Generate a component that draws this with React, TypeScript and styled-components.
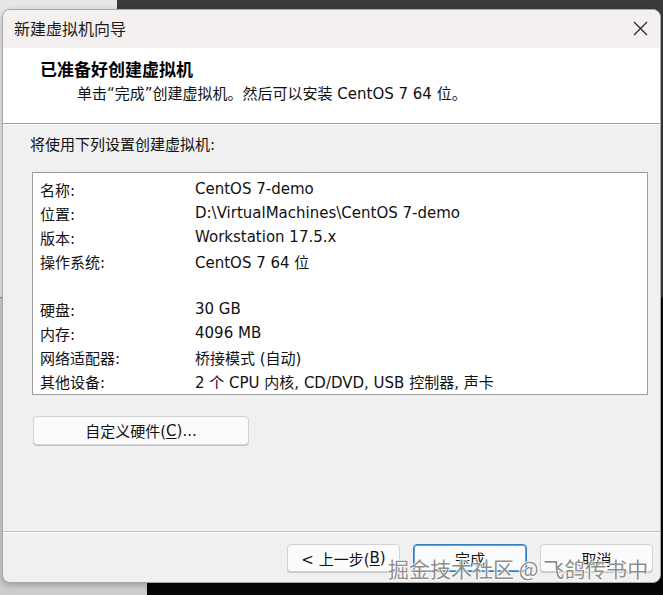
import styled, { createGlobalStyle } from "styled-components";

const GlobalStyle = createGlobalStyle`
  html, body {
    margin: 0;
    padding: 0;
  }
  body {
    font-family: "DejaVu Sans", "Noto Sans CJK SC", sans-serif;
    color: #111;
  }
`;

const Stage = styled.div`
  position: relative;
  width: 663px;
  height: 595px;
  overflow: hidden;
  box-sizing: border-box;
  padding: 9px 0 0 2px;
  background:
    linear-gradient(#e7e7e7, #e7e7e7) 0 0 / 117px 50% no-repeat,
    linear-gradient(#3a3a3a, #3a3a3a) 0 0 / 100% 50% no-repeat,
    linear-gradient(#cdcdcd, #cdcdcd) 0 100% / 147px 50% no-repeat,
    #060606;
`;

const Window = styled.div`
  width: 659px;
  height: 574px;
  box-sizing: border-box;
  display: flex;
  flex-direction: column;
  border: 1px solid #a9a9a9;
  border-radius: 8px;
  overflow: hidden;
  background: #f0f0f0;
  box-shadow: 0 2px 6px rgba(0, 0, 0, 0.25);
`;

const TitleBar = styled.div`
  height: 38px;
  flex: none;
  display: flex;
  align-items: center;
  justify-content: space-between;
  padding: 0 9px 2px 11px;
  box-sizing: border-box;
  background: #f4f0ef;
  font-family: "Noto Sans CJK SC", sans-serif;
  font-size: 16px;
  color: #1a1a1a;
`;

const CloseButton = styled.span`
  display: flex;
  align-items: center;
  justify-content: center;
  width: 22px;
  height: 22px;
`;

const Header = styled.div`
  height: 76px;
  flex: none;
  box-sizing: border-box;
  padding: 10px 0 0 37px;
  background: #ffffff;
  border-bottom: 1px solid #a0a0a0;
  box-shadow: 0 1px 0 #ffffff;
`;

const Heading = styled.div`
  font-family: "Noto Sans CJK SC", sans-serif;
  font-weight: 700;
  font-size: 17px;
  line-height: 22px;
  color: #000;
`;

const Subtitle = styled.div`
  margin-top: 2px;
  padding-left: 37px;
  font-size: 15px;
  line-height: 24px;
  color: #111;
`;

const Body = styled.div`
  flex: 1;
  display: flex;
  flex-direction: column;
  padding: 11px 12px 0 29px;
`;

const Intro = styled.div`
  margin-left: -2px;
  font-size: 15px;
  line-height: 20px;
`;

const SummaryBox = styled.div`
  margin-top: 17px;
  height: 223px;
  box-sizing: border-box;
  padding: 4px 7px 0;
  background: #ffffff;
  border: 1px solid #9c9c9c;
`;

const SummaryRow = styled.div`
  display: grid;
  grid-template-columns: 155px 1fr;
  height: 24px;
  align-items: center;
  font-size: 15px;
  white-space: nowrap;
`;

const Button = styled.button<{ $width: number; $primary?: boolean }>`
  width: ${(p) => p.$width}px;
  height: 28px;
  box-sizing: border-box;
  padding: 0;
  border-radius: 4px;
  border: 1px solid ${(p) => (p.$primary ? "#2f7fc4" : "#d2d2d2")};
  box-shadow: ${(p) => (p.$primary ? "inset 0 0 0 1px #5ea0d8" : "0 1px 0 #c4c4c4")};
  background: #fbfbfb;
  font-family: "DejaVu Sans", "Noto Sans CJK SC", sans-serif;
  font-size: 15px;
  color: #111;
  display: flex;
  align-items: center;
  justify-content: center;
`;

const CustomButton = styled(Button)`
  margin-top: 21px;
  margin-left: 1px;
  height: 29px;
`;

const Footer = styled.div`
  height: 51px;
  flex: none;
  box-sizing: border-box;
  display: flex;
  justify-content: flex-end;
  gap: 13px;
  padding: 12px 7px 0 0;
  border-top: 1px solid #bdbdbd;
  box-shadow: inset 0 1px 0 #ffffff;
`;

const Key = styled.span`
  text-decoration: underline;
  text-underline-offset: 2px;
`;

const Watermark = styled.div`
  position: absolute;
  left: 388px;
  top: 553px;
  font-family: "Noto Sans CJK SC", sans-serif;
  font-size: 21px;
  line-height: 30px;
  color: rgba(110, 110, 110, 0.8);
  text-shadow:
    1px 0 0 rgba(255, 255, 255, 0.8),
    -1px 0 0 rgba(255, 255, 255, 0.8),
    0 1px 0 rgba(255, 255, 255, 0.8),
    0 -1px 0 rgba(255, 255, 255, 0.8);
  white-space: nowrap;
  pointer-events: none;
`;

const rows: [string, string][] = [
  ["名称:", "CentOS 7-demo"],
  ["位置:", "D:\\VirtualMachines\\CentOS 7-demo"],
  ["版本:", "Workstation 17.5.x"],
  ["操作系统:", "CentOS 7 64 位"],
  ["", ""],
  ["硬盘:", "30 GB"],
  ["内存:", "4096 MB"],
  ["网络适配器:", "桥接模式 (自动)"],
  ["其他设备:", "2 个 CPU 内核, CD/DVD, USB 控制器, 声卡"],
];

export default function App() {
  return (
    <Stage>
      <GlobalStyle />
      <Window>
        <TitleBar>
          <span>新建虚拟机向导</span>
          <CloseButton>
            <svg width="15" height="15" viewBox="0 0 15 15">
              <path d="M1 1 L14 14 M14 1 L1 14" stroke="#222" strokeWidth="1.2" fill="none" />
            </svg>
          </CloseButton>
        </TitleBar>
        <Header>
          <Heading>已准备好创建虚拟机</Heading>
          <Subtitle>单击“完成”创建虚拟机。然后可以安装 CentOS 7 64 位。</Subtitle>
        </Header>
        <Body>
          <Intro>将使用下列设置创建虚拟机:</Intro>
          <SummaryBox>
            {rows.map(([label, value], i) => (
              <SummaryRow key={i}>
                <span>{label}</span>
                <span>{value}</span>
              </SummaryRow>
            ))}
          </SummaryBox>
          <CustomButton $width={216}>
            自定义硬件(<Key>C</Key>)...
          </CustomButton>
        </Body>
        <Footer>
          <Button $width={113}>
            &lt; 上一步(<Key>B</Key>)
          </Button>
          <Button $width={114} $primary>
            完成
          </Button>
          <Button $width={113}>取消</Button>
        </Footer>
      </Window>
      <Watermark>掘金技术社区 @ 飞鸽传书中</Watermark>
    </Stage>
  );
}
